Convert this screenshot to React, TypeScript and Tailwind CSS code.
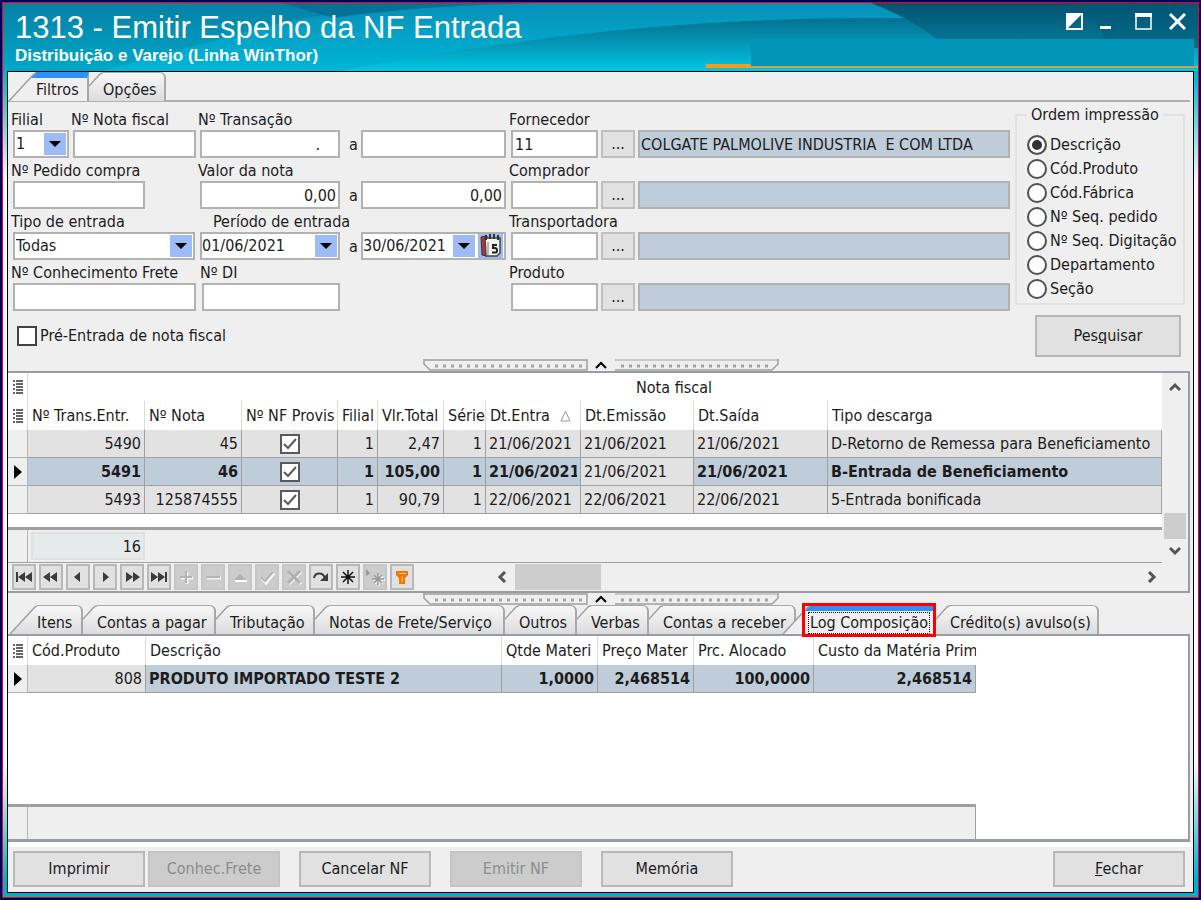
import { useState } from "react";
import type { ReactNode } from "react";
import clsx from "clsx";

const ordemOptions = [
  "Descrição",
  "Cód.Produto",
  "Cód.Fábrica",
  "Nº Seq. pedido",
  "Nº Seq. Digitação",
  "Departamento",
  "Seção",
];

const notas = [
  { trans: "5490", nota: "45", filial: "1", total: "2,47", serie: "1", entrada: "21/06/2021", emissao: "21/06/2021", saida: "21/06/2021", tipo: "D-Retorno de Remessa para Beneficiamento" },
  { trans: "5491", nota: "46", filial: "1", total: "105,00", serie: "1", entrada: "21/06/2021", emissao: "21/06/2021", saida: "21/06/2021", tipo: "B-Entrada de Beneficiamento" },
  { trans: "5493", nota: "125874555", filial: "1", total: "90,79", serie: "1", entrada: "22/06/2021", emissao: "22/06/2021", saida: "22/06/2021", tipo: "5-Entrada bonificada" },
];

const detailTabs = [
  { name: "Itens", width: "w-[74px]" },
  { name: "Contas a pagar", width: "w-[133px]" },
  { name: "Tributação", width: "w-[99px]" },
  { name: "Notas de Frete/Serviço", width: "w-[190px]" },
  { name: "Outros", width: "w-[72px]" },
  { name: "Verbas", width: "w-[72px]" },
  { name: "Contas a receber", width: "w-[147px]" },
  { name: "Log Composição", width: "w-[154px]" },
  { name: "Crédito(s) avulso(s)", width: "w-[163px]" },
];

const navButtons = [
  { name: "Primeiro", disabled: false },
  { name: "Página anterior", disabled: false },
  { name: "Anterior", disabled: false },
  { name: "Próximo", disabled: false },
  { name: "Próxima página", disabled: false },
  { name: "Último", disabled: false },
  { name: "Inserir", disabled: true },
  { name: "Excluir", disabled: true },
  { name: "Editar", disabled: true },
  { name: "Gravar", disabled: true },
  { name: "Cancelar", disabled: true },
  { name: "Atualizar", disabled: false },
  { name: "Marcar", disabled: false },
  { name: "Ir para marca", disabled: true },
  { name: "Filtrar", disabled: false },
];

const dark = "#3c3c3c";

const navDrawings: Record<string, ReactNode> = {
  "Primeiro": <path fill={dark} d="M4 7h2v10H4zM13 7v10l-7-5zM20 7v10l-7-5z" />,
  "Página anterior": <path fill={dark} d="M11 7v10l-7-5zM18 7v10l-7-5z" />,
  "Anterior": <path fill={dark} d="M14 7v10l-6-5z" />,
  "Próximo": <path fill={dark} d="M10 7v10l6-5z" />,
  "Próxima página": <path fill={dark} d="M6 7v10l7-5zM13 7v10l7-5z" />,
  "Último": <path fill={dark} d="M4 7v10l7-5zM11 7v10l7-5zM18 7h2v10h-2z" />,
  "Inserir": (
    <>
      <path stroke="#f4f4f4" strokeWidth="3" d="M13 7v12M7 13h12" />
      <path stroke="#b4b4b4" strokeWidth="2" d="M12 6v12M6 12h12" />
    </>
  ),
  "Excluir": (
    <>
      <path stroke="#f4f4f4" strokeWidth="3" d="M6 13h14" />
      <path stroke="#b4b4b4" strokeWidth="2" d="M5 12h14" />
    </>
  ),
  "Editar": (
    <>
      <path fill="#fff" d="M7 15h12v2H7z" />
      <path fill="#b0b0b0" d="M6 15h12l-6-6z" />
    </>
  ),
  "Gravar": (
    <>
      <path stroke="#f4f4f4" strokeWidth="3" d="M7 13l4 5 8-10" />
      <path stroke="#b4b4b4" strokeWidth="2" d="M6 12l4 4 8-9" />
    </>
  ),
  "Cancelar": (
    <>
      <path stroke="#f4f4f4" strokeWidth="3" d="M7 7l12 12M19 7L7 19" />
      <path stroke="#b0b0b0" strokeWidth="3" d="M6 6l12 12M18 6L6 18" />
    </>
  ),
  "Atualizar": (
    <>
      <path stroke={dark} strokeWidth="2" d="M5 13c1-6 9-6 11 0" />
      <path fill={dark} d="M19 8v8h-8z" />
    </>
  ),
  "Marcar": <path stroke="#111" strokeWidth="1.5" d="M12 5v14M5 12h14M7 7l10 10M17 7L7 17" />,
  "Ir para marca": (
    <>
      <path stroke="#f4f4f4" strokeWidth="1.5" d="M16 9v12M10 15h12M12 11l8 8M20 11l-8 8" />
      <path stroke="#999" strokeWidth="1.5" d="M15 8v12M9 14h12M11 10l8 8M19 10l-8 8" />
      <path fill="#999" d="M3 4v7l4-3z" />
    </>
  ),
  "Filtrar": (
    <>
      <path fill="#f07800" d="M6 6h12v4l-3 3v6H9v-6l-3-3z" />
      <path fill="#ffd9a8" d="M9 8h7v1H9z" />
      <path fill="#ff9c2a" d="M11 11h2v6h-2z" />
    </>
  ),
};

const Label = ({ htmlFor, children, className }: { htmlFor: string; children: ReactNode; className?: string }) => (
  <label htmlFor={htmlFor} className={clsx("block h-[23px] leading-[25px] whitespace-nowrap", className)}>
    {children}
  </label>
);

const Field = ({ id, label, value = "", width, inputClass }: { id: string; label?: string; value?: string; width: string; inputClass?: string }) => (
  <div className={clsx("shrink-0", width)}>
    {label ? <Label htmlFor={id}>{label}</Label> : <div className="h-[23px]" />}
    <div className="pl-0.5">
      <input
        id={id}
        aria-label={label ?? "Valor final"}
        defaultValue={value}
        className={clsx("block h-7 w-full border-2 border-[#b2b2b2] bg-white px-0.5 outline-none", inputClass)}
      />
    </div>
  </div>
);

const Arrow = () => (
  <span className="pointer-events-none absolute inset-y-px right-px flex w-[22px] items-center justify-center bg-[#9dbcf5]">
    <svg width="12" height="6" viewBox="0 0 12 6"><path d="M0 0h12L6 6z" fill="#000" /></svg>
  </span>
);

const SelectField = ({ id, label, value, width }: { id: string; label: string; value: string; width: string }) => (
  <div className={clsx("shrink-0", width)}>
    <Label htmlFor={id}>{label}</Label>
    <div className="pl-0.5">
      <div className="relative h-7 border-2 border-[#b2b2b2] bg-white">
        <select id={id} className="block h-6 w-full appearance-none px-px outline-none">
          <option>{value}</option>
        </select>
        <Arrow />
      </div>
    </div>
  </div>
);

const Between = () => <span className="w-[19px] shrink-0 pt-[26px] pl-[9px] leading-6">a</span>;

const LookupField = ({ id, label, code = "", text = "" }: { id: string; label: string; code?: string; text?: string }) => (
  <div>
    <Label htmlFor={id}>{label}</Label>
    <div className="flex gap-[3px] pl-0.5">
      <input id={id} defaultValue={code} className="h-7 w-[87px] border-2 border-[#b2b2b2] bg-white px-0.5 outline-none" />
      <button aria-label={`Procurar ${label}`} className="h-7 w-[34px] border-2 border-[#c0c0c0] bg-[#e1e1e1] leading-6">...</button>
      <input readOnly aria-label={`Nome ${label}`} value={text} className="h-7 min-w-0 flex-1 border-2 border-[#b2b2b2] bg-[#bfccda] px-px outline-none" />
    </div>
  </div>
);

const GridCheck = ({ label }: { label: string }) => (
  <span className="relative mx-auto block h-5 w-5">
    <input type="checkbox" aria-label={label} defaultChecked className="block h-5 w-5 appearance-none border-2 border-[#5a5a5a] bg-white" />
    <svg className="pointer-events-none absolute inset-0" width="20" height="20" viewBox="0 0 20 20" fill="none">
      <path d="M4 10l4 4 8-9" stroke="#5a5a5a" strokeWidth="2" />
    </svg>
  </span>
);

const Tab = ({ name, width, active, first, onClick }: { name: string; width: string; active: boolean; first?: boolean; onClick: () => void }) => {
  const wide = first || active;
  return (
    <button
      role="tab"
      aria-selected={active}
      onClick={onClick}
      className={clsx("relative flex h-[29px] shrink-0", width, active && "z-10", active && !first && "-ml-[14px]")}
    >
      <svg width={wide ? 28 : 14} height="29" viewBox={wide ? "0 0 28 29" : "0 0 14 29"} className="shrink-0">
        <defs>
          <linearGradient id="tabFill" x1="0" y1="0" x2="0" y2="1">
            <stop offset="0" stopColor="#f8f8f8" />
            <stop offset="1" stopColor="#dcdcdc" />
          </linearGradient>
        </defs>
        <path d={wide ? "M1 29L28 0v29z" : "M0 14L14 0v29H0z"} fill={active ? "#efefef" : "url(#tabFill)"} />
        {active && <path d="M22 6L28 0v6z" fill="#3090f8" />}
        <path d={wide ? "M1 29L25 3Q27 1 28 1" : "M0 14L11 2Q12 1 14 1"} fill="none" stroke="#a0a0a0" strokeWidth="1.5" />
      </svg>
      <span
        className={clsx(
          "h-full flex-1 text-left whitespace-nowrap",
          active ? "border-t-[6px] border-r-2 border-[#a8a8a8] border-t-[#3090f8] bg-[#efefef] leading-6" : "rounded-tr-md border-t border-r-2 border-[#a8a8a8] bg-linear-to-b from-[#f8f8f8] to-[#dcdcdc] leading-[34px]"
        )}
      >
        {name}
      </span>
    </button>
  );
};

const Splitter = () => (
  <div className="flex h-3 justify-center">
    <button aria-label="Recolher painel" className="block">
      <svg width="356" height="12" viewBox="0 0 356 12" fill="none">
        <path d="M1 0v5l6 6h157V1H1M355 0v5l-6 6H192" stroke="#a0a0a0" strokeWidth="1.5" />
        <path d="M192 1h163" stroke="#a0a0a0" />
        <path d="M12 7h148M198 7h148" stroke="#a4a4a4" strokeWidth="3" strokeDasharray="3 5" />
        <path d="M173 9l5-5 5 5" stroke="#000" strokeWidth="2" />
      </svg>
    </button>
  </div>
);

const ColumnsIcon = () => (
  <svg width="10" height="14" viewBox="0 0 10 14" className="mx-auto">
    <path d="M0 1h2M0 5h2M0 9h2M0 13h2" stroke="#333" strokeWidth="1.5" />
    <path d="M3 1h7M3 4h7M3 7h7M3 10h7M3 13h7" stroke="#333" strokeWidth="1.5" />
  </svg>
);

const Pointer = () => (
  <svg width="8" height="14" viewBox="0 0 8 14" className="mx-auto"><path d="M0 0l8 7-8 7z" fill="#000" /></svg>
);

const Chevron = ({ d }: { d: string }) => (
  <svg width="12" height="12" viewBox="0 0 12 12" fill="none"><path d={d} stroke="#555" strokeWidth="3" /></svg>
);

const Th = ({ children, last }: { children?: ReactNode; last?: boolean }) => (
  <th className={clsx("h-[29px] bg-white pl-1 text-left font-normal", !last && "border-r border-[#dcdcdc]")}>
    <div className="overflow-hidden whitespace-nowrap">{children}</div>
  </th>
);

const Td = ({ children, right, selected }: { children?: ReactNode; right?: boolean; selected?: boolean }) => (
  <td
    className={clsx(
      "h-7 border-r border-b border-[#a0a0a0] px-[3px] pt-px",
      right && "text-right",
      selected ? "bg-[#bfccda] font-bold" : "bg-[#e2e2e2]"
    )}
  >
    <div className="overflow-hidden whitespace-nowrap">{children}</div>
  </td>
);

const Indicator = ({ children }: { children?: ReactNode }) => (
  <td className="h-7 border-r border-b border-[#b4b4b4] bg-[#efefef]">{children}</td>
);

const ActionButton = ({ children, disabled, className }: { children: ReactNode; disabled?: boolean; className?: string }) => (
  <button
    disabled={disabled}
    className={clsx(
      "h-9 w-[132px] shrink-0 border-2",
      disabled ? "border-[#c4c4c4] bg-[#cccccc] text-[#8c8c8c]" : "border-[#b8b8b8] bg-[#e1e1e1]",
      className
    )}
  >
    {children}
  </button>
);

const TitleBar = () => (
  <header className="relative flex h-[68px] shrink-0 justify-between overflow-hidden">
    <svg className="absolute inset-0 h-full w-full" viewBox="0 0 1195 68" preserveAspectRatio="none">
      <defs>
        <linearGradient id="sky" x1="0" y1="0" x2="0" y2="1">
          <stop offset="0" stopColor="#067fa6" />
          <stop offset="1" stopColor="#00a8c8" />
        </linearGradient>
        <linearGradient id="band" x1="0" y1="0" x2="0" y2="1">
          <stop offset="0" stopColor="#0690b8" />
          <stop offset="1" stopColor="#00b6d6" />
        </linearGradient>
        <linearGradient id="wave" x1="0" y1="0" x2="0" y2="1">
          <stop offset="0" stopColor="#04708f" />
          <stop offset="0.5" stopColor="#0598b8" />
          <stop offset="1" stopColor="#00c8e2" />
        </linearGradient>
        <linearGradient id="deep" x1="0" y1="0" x2="0" y2="1">
          <stop offset="0" stopColor="#035270" />
          <stop offset="1" stopColor="#057c9c" />
        </linearGradient>
      </defs>
      <rect width="1195" height="68" fill="url(#sky)" />
      <path d="M240 30C330 4 430 0 500 0h695v68H100Z" fill="url(#band)" />
      <path d="M280 0h260C440 2 380 8 330 15z" fill="#067196" />
      <path d="M335 68C480 42 640 16 860 15c130 0 240 8 335 20v33z" fill="url(#wave)" />
      <path d="M868 0h327v45H945C925 28 900 12 868 0z" fill="url(#deep)" />
      <path d="M1070 0h125v45h-90c-5-20-18-35-35-45z" fill="#025a78" opacity="0.5" />
      <path d="M748 36h443v28H748z" fill="#0094b6" />
      <path d="M703 61h45v4h-45z" fill="#f79a1c" />
      <path d="M748 63h447v2H748z" fill="#c9a452" />
    </svg>
    <div className="relative pt-2 pl-3 text-white">
      <h1 className="font-['Liberation_Sans',sans-serif] text-[31px] leading-[34px] whitespace-nowrap">1313 - Emitir Espelho da NF Entrada</h1>
      <p className="font-['Liberation_Sans',sans-serif] text-[17px] leading-[22px] font-bold whitespace-nowrap">Distribuição e Varejo (Linha WinThor)</p>
    </div>
    <div className="relative flex items-start gap-[17px] pt-[10px] pr-3">
      <button aria-label="Restaurar tema">
        <svg width="17" height="17" viewBox="0 0 17 17"><path d="M1 1h15v15H1z" fill="none" stroke="#fff" strokeWidth="2" /><path d="M0 0h17L0 17z" fill="#fff" /></svg>
      </button>
      <button aria-label="Minimizar">
        <svg width="12" height="17" viewBox="0 0 12 17"><path d="M0 13h11v3H0z" fill="#fff" /></svg>
      </button>
      <button aria-label="Maximizar" className="ml-1.5">
        <svg width="17" height="17" viewBox="0 0 17 17"><path d="M1 1h15v15H1z" fill="none" stroke="#fff" strokeWidth="1.5" /><path d="M0 0h17v4H0z" fill="#fff" /></svg>
      </button>
      <button aria-label="Fechar janela">
        <svg width="17" height="17" viewBox="0 0 17 17"><path d="M1 1l15 15M16 1L1 16" stroke="#fff" strokeWidth="3" /></svg>
      </button>
    </div>
  </header>
);

const FiltersForm = () => {
  const [ordem, setOrdem] = useState("Descrição");

  return (
    <form className="flex h-[257px] shrink-0 pt-[5px]" onSubmit={e => e.preventDefault()}>
      <div className="w-[501px] shrink-0 pl-[3px]">
        <div className="flex">
          <SelectField id="filial" label="Filial" value="1" width="w-[58px] mr-0.5" />
          <Field id="nota" label="Nº Nota fiscal" width="w-[125px] mr-0.5" />
          <Field id="transacao" label="Nº Transação" value="." width="w-[142px]" inputClass="pr-[18px] text-right text-[#0000ff]" />
          <Between />
          <Field id="transacao2" width="w-[147px]" />
        </div>
        <div className="flex">
          <Field id="pedido" label="Nº Pedido compra" width="w-[134px] mr-[53px]" />
          <Field id="valor" label="Valor da nota" value="0,00" width="w-[142px]" inputClass="text-right" />
          <Between />
          <Field id="valor2" value="0,00" width="w-[147px]" inputClass="text-right" />
        </div>
        <div className="flex">
          <SelectField id="tipo" label="Tipo de entrada" value="Todas" width="w-[184px] mr-[3px]" />
          <div className="w-[142px] shrink-0">
            <Label htmlFor="inicio" className="pl-[15px]">Período de entrada</Label>
            <div className="relative ml-0.5 h-7 border-2 border-[#b2b2b2] bg-white">
              <input id="inicio" defaultValue="01/06/2021" className="block h-6 w-full outline-none" />
              <Arrow />
            </div>
          </div>
          <Between />
          <div className="w-[147px] shrink-0 pt-[23px] pl-0.5">
            <div className="flex h-7 items-center border-2 border-[#b2b2b2] bg-white">
              <input aria-label="Período final" defaultValue="30/06/2021" className="block h-6 w-[86px] outline-none" />
              <span className="relative h-6 w-[27px]"><Arrow /></span>
              <button aria-label="Calendário" className="ml-0.5 bg-[#9dbcf5]">
                <svg width="25" height="24" viewBox="0 0 25 24">
                  <path d="M3 3l6-1v20l-5-1z" fill="#b5382a" stroke="#333" />
                  <path d="M7 4h15v15l-3 3H8z" fill="#f4f4f4" stroke="#444" strokeWidth="1.5" />
                  <path d="M8 1v5M12 0v5M16 0v5M20 1v5" stroke="#333" strokeWidth="2" />
                  <path d="M10 8v13" stroke="#b8b8b8" strokeWidth="2" />
                  <path d="M19 11h-4v3h2q2 0 2 2.500t-2 2h-3" fill="none" stroke="#222" strokeWidth="2" />
                </svg>
              </button>
            </div>
          </div>
        </div>
        <div className="flex">
          <Field id="frete" label="Nº Conhecimento Frete" width="w-[185px] mr-1" />
          <Field id="di" label="Nº DI" width="w-[140px]" />
        </div>
        <div className="mt-[15px] ml-1.5 flex items-center gap-[3px]">
          <input id="pre" type="checkbox" className="h-5 w-5 appearance-none border-2 border-[#444] bg-white checked:bg-[#555]" />
          <label htmlFor="pre" className="leading-5">Pré-Entrada de nota fiscal</label>
        </div>
      </div>

      <div className="min-w-0 flex-1">
        <LookupField id="fornecedor" label="Fornecedor" code="11" text="COLGATE PALMOLIVE INDUSTRIA  E COM LTDA" />
        <LookupField id="comprador" label="Comprador" />
        <LookupField id="transportadora" label="Transportadora" />
        <LookupField id="produto" label="Produto" />
      </div>

      <div className="ml-[5px] w-[178px] shrink-0 pr-2">
        <fieldset className="h-[198px] border-2 border-[#e2e2e2] pl-[10px]">
          <legend className="px-1 leading-4">Ordem impressão</legend>
          <div className="pt-[10px]">
            {ordemOptions.map(option => (
              <label key={option} className="flex h-6 items-center gap-[3px] whitespace-nowrap">
                <input
                  type="radio"
                  name="ordem"
                  checked={ordem === option}
                  onChange={() => setOrdem(option)}
                  className="h-5 w-5 shrink-0 appearance-none rounded-full border-2 border-[#505050] bg-white checked:bg-[#333] checked:shadow-[inset_0_0_0_3px_white]"
                />
                {option}
              </label>
            ))}
          </div>
        </fieldset>
        <button className="mt-[10px] ml-5 block h-[42px] w-[146px] border-2 border-[#b8b8b8] bg-[#e1e1e1]">Pes<u>q</u>uisar</button>
      </div>
    </form>
  );
};

const NotasGrid = () => (
  <section className="mr-[3px] shrink-0 border-2 border-l-0 border-[#989ca4]">
    <div className="flex">
      <div className="min-w-0 flex-1">
        <table className="w-full table-fixed border-separate border-spacing-0">
          <colgroup>
            <col className="w-5" />
            <col className="w-[117px]" />
            <col className="w-[97px]" />
            <col className="w-[96px]" />
            <col className="w-10" />
            <col className="w-[66px]" />
            <col className="w-[42px]" />
            <col className="w-[95px]" />
            <col className="w-[113px]" />
            <col className="w-[134px]" />
            <col />
          </colgroup>
          <thead>
            <tr>
              <th className="h-7 border-r border-[#dcdcdc] bg-white"><ColumnsIcon /></th>
              <th colSpan={10} className="h-7 bg-white pt-px pl-[158px] text-center font-normal">Nota fiscal</th>
            </tr>
            <tr>
              <th className="border-r border-[#dcdcdc] bg-white"><ColumnsIcon /></th>
              <Th>Nº Trans.Entr.</Th>
              <Th>Nº Nota</Th>
              <Th>Nº NF Provis</Th>
              <Th>Filial</Th>
              <Th>Vlr.Total</Th>
              <Th>Série</Th>
              <Th>
                <div className="flex items-center gap-[10px]">
                  <span>Dt.Entra</span>
                  <svg width="11" height="12" viewBox="0 0 11 12"><path d="M1 11L5.500 1 10 11z" fill="none" stroke="#999" /></svg>
                </div>
              </Th>
              <Th>Dt.Emissão</Th>
              <Th>Dt.Saída</Th>
              <Th last>Tipo descarga</Th>
            </tr>
          </thead>
          <tbody>
            {notas.map(nota => {
              const selected = nota.trans === "5491";
              return (
                <tr key={nota.trans}>
                  <Indicator>{selected ? <Pointer /> : null}</Indicator>
                  <Td right selected={selected}>{nota.trans}</Td>
                  <Td right selected={selected}>{nota.nota}</Td>
                  <Td selected={selected}><GridCheck label={`NF provisória ${nota.trans}`} /></Td>
                  <Td right selected={selected}>{nota.filial}</Td>
                  <Td right selected={selected}>{nota.total}</Td>
                  <Td right selected={selected}>{nota.serie}</Td>
                  <Td selected={selected}>{nota.entrada}</Td>
                  <Td>{nota.emissao}</Td>
                  <Td selected={selected}>{nota.saida}</Td>
                  <Td selected={selected}>{nota.tipo}</Td>
                </tr>
              );
            })}
          </tbody>
        </table>
        <div className="h-[13px] bg-white" />
        <div className="flex h-9 border-t-[3px] border-b border-[#a0a0a0] bg-[#efefef]">
          <div className="w-5 border-r border-[#b4b4b4]" />
          <div className="mt-0.5 ml-[3px] h-7 w-[114px] border-2 border-[#dfe1e1] bg-[#e6eaea] pr-0.5 text-right leading-[26px]">16</div>
        </div>
      </div>
      <div className="flex w-[26px] flex-col items-center">
        <button aria-label="Rolar para cima" className="flex h-7 items-center"><Chevron d="M1 9l5-5 5 5" /></button>
        <div className="flex-1" />
        <div className="h-[26px] w-[22px] bg-[#cdcdcd]" />
        <button aria-label="Rolar para baixo" className="flex h-6 items-center"><Chevron d="M1 3l5 5 5-5" /></button>
      </div>
    </div>
    <div className="flex h-7 items-center gap-[3px] pl-1">
      {navButtons.map(({ name, disabled }) => (
        <button
          key={name}
          aria-label={name}
          disabled={disabled}
          className={clsx("flex h-[26px] w-6 shrink-0 items-center justify-center border-2", disabled ? "border-[#c6c6c6] bg-[#cccccc]" : "border-[#b8b8b8] bg-[#e1e1e1]")}
        >
          <svg width="20" height="22" viewBox="2 1 20 22" fill="none">{navDrawings[name]}</svg>
        </button>
      ))}
      <button aria-label="Rolar para a esquerda" className="ml-[79px]"><Chevron d="M9 1L4 6l5 5" /></button>
      <div className="ml-1 h-[26px] w-[86px] bg-[#cdcdcd]" />
      <button aria-label="Rolar para a direita" className="mr-[30px] ml-auto"><Chevron d="M3 1l5 5-5 5" /></button>
    </div>
  </section>
);

const ComposicaoGrid = () => (
  <section className="mr-[3px] flex flex-1 flex-col border-r-2 border-b-[3px] border-[#989ca4] bg-white">
    <table className="w-[968px] table-fixed border-separate border-spacing-0">
      <colgroup>
        <col className="w-5" />
        <col className="w-[118px]" />
        <col className="w-[356px]" />
        <col className="w-24" />
        <col className="w-24" />
        <col className="w-[120px]" />
        <col />
      </colgroup>
      <thead>
        <tr>
          <th className="border-r border-[#dcdcdc]"><ColumnsIcon /></th>
          <Th>Cód.Produto</Th>
          <Th>Descrição</Th>
          <Th>Qtde Materi</Th>
          <Th>Preço Mater</Th>
          <Th>Prc. Alocado</Th>
          <Th last>Custo da Matéria Prim</Th>
        </tr>
      </thead>
      <tbody>
        <tr>
          <Indicator><Pointer /></Indicator>
          <Td right>808</Td>
          <Td selected>PRODUTO IMPORTADO TESTE 2</Td>
          <Td right selected>1,0000</Td>
          <Td right selected>2,468514</Td>
          <Td right selected>100,0000</Td>
          <Td right selected>2,468514</Td>
        </tr>
      </tbody>
    </table>
    <div className="flex-1" />
    <div className="flex h-[35px] w-[968px] border-t-[3px] border-r border-[#a0a0a0] bg-[#efefef]">
      <div className="w-5 border-r border-[#b4b4b4]" />
    </div>
  </section>
);

const App = () => {
  const [filterTab, setFilterTab] = useState("Filtros");
  const [detailTab, setDetailTab] = useState("Log Composição");

  return (
    <div className="flex min-h-screen flex-col bg-[#00005c] p-0.5 font-['DejaVu_Sans_Condensed','Noto_Sans',sans-serif] text-base leading-6 text-[#1c1c1c]">
      <div className="flex flex-1 flex-col border border-[#ff0000] bg-[linear-gradient(to_bottom,#00b4d0_8%,#f4fcfc_20%,#f4fcfc_85%,#00b0cc_98%)]">
        <TitleBar />
        <main className="mx-1 mb-1 flex flex-1 flex-col border border-black bg-[#efefef]">
          <div role="tablist" className="mr-[3px] flex h-[30px] shrink-0 border-b-2 border-[#b0b0b0]">
            <Tab name="Filtros" width="w-[81px]" first active={filterTab === "Filtros"} onClick={() => setFilterTab("Filtros")} />
            <Tab name="Opções" width="w-[77px]" active={filterTab === "Opções"} onClick={() => setFilterTab("Opções")} />
          </div>
          <FiltersForm />
          <Splitter />
          <NotasGrid />
          <Splitter />
          <div role="tablist" className="relative mr-[3px] flex h-[31px] shrink-0 border-b-2 border-[#989ca4] pl-px">
            {detailTabs.map(({ name, width }, index) => (
              <Tab key={name} name={name} width={width} first={index === 0} active={name === detailTab} onClick={() => setDetailTab(name)} />
            ))}
            <span className="pointer-events-none absolute -top-0.5 left-[794px] z-20 h-[34px] w-[134px] border-[3px] border-[#ff0000]">
              <span className="absolute inset-x-[3px] top-[6px] bottom-0 border border-dotted border-black" />
            </span>
          </div>
          <ComposicaoGrid />
          <div className="h-[5px] shrink-0 bg-white" />
          <footer className="flex shrink-0 px-[5px] pt-1 pb-[5px]">
            <ActionButton>Imprimir</ActionButton>
            <ActionButton disabled className="ml-[3px]">Conhec.Frete</ActionButton>
            <ActionButton className="ml-[19px]">Cancelar NF</ActionButton>
            <ActionButton disabled className="ml-[19px]">Emitir NF</ActionButton>
            <ActionButton className="ml-[19px]">Memória</ActionButton>
            <ActionButton className="mr-[3px] ml-auto"><u>F</u>echar</ActionButton>
          </footer>
        </main>
      </div>
    </div>
  );
};

export default App;
